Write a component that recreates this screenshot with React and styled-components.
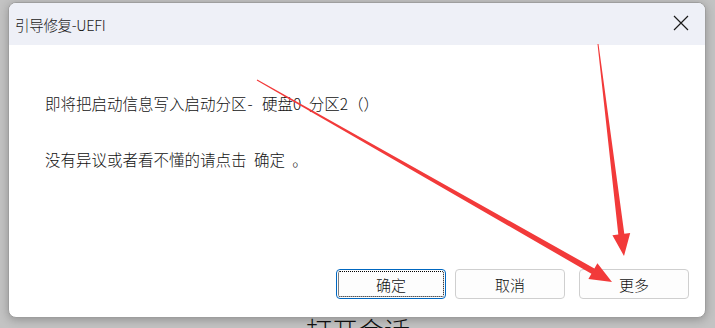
import React from "react";
import styled, { createGlobalStyle } from "styled-components";

const GlobalStyle = createGlobalStyle`
  html, body {
    margin: 0;
    padding: 0;
    background: #c3c3c3;
    overflow: hidden;
  }
  body {
    font-family: "Noto Sans CJK SC", "Noto Sans", sans-serif;
  }
`;

function App() {
  return (
    <Page>
      <GlobalStyle />
      <Window>
        <TitleBar>
          <Title>引导修复-UEFI</Title>
          <CloseButton>
            <svg width="16" height="16" viewBox="0 0 16 16">
              <path d="M1 1 L15 15 M15 1 L1 15" stroke="#1a1a1a" strokeWidth="1.2" fill="none" />
            </svg>
          </CloseButton>
        </TitleBar>
        <Body>
          <Message>即将把启动信息写入启动分区<Dash>-</Dash> 硬盘0 分区2（）</Message>
          <Message>没有异议或者看不懂的请点击 确定 。</Message>
          <ButtonRow>
            <DialogButton $focused>确定</DialogButton>
            <DialogButton>取消</DialogButton>
            <DialogButton $extra>更多</DialogButton>
          </ButtonRow>
        </Body>
      </Window>
      <BehindText>打开会话</BehindText>

      {/* red annotation arrows drawn over the screenshot */}
      <Arrows width="715" height="328" viewBox="0 0 715 328">
        <polygon
          fill="#f23a3a"
          points="256.75,80.44 591.4,273.7 588.4,278.9 612,282 597.4,263.3 594.4,268.5 257.25,79.56"
        />
        <polygon
          fill="#f23a3a"
          points="597.5,44.06 618.3,234.6 612.4,235.3 624,256 630.2,233.1 624.3,233.8 598.5,43.94"
        />
      </Arrows>
    </Page>
  );
}

export default App;

const Page = styled.div`
  position: relative;
  width: 715px;
  height: 328px;
  padding: 2px 0 0 8px;
  box-sizing: border-box;
  display: flex;
  flex-direction: column;
  align-items: flex-start;
  overflow: hidden;
`;

const Window = styled.div`
  width: 698px;
  height: 316px;
  flex-shrink: 0;
  box-sizing: border-box;
  border: 1px solid #9e9e9e;
  border-radius: 8px;
  background: #ffffff;
  overflow: hidden;
  display: flex;
  flex-direction: column;
  box-shadow: 0 2px 10px rgba(0, 0, 0, 0.25);
  position: relative;
  z-index: 1;
`;

const TitleBar = styled.div`
  height: 42px;
  flex-shrink: 0;
  background: #eef0f7;
  display: flex;
  align-items: center;
  justify-content: space-between;
  padding: 0 16px 0 6px;
`;

const Title = styled.div`
  font-size: 14.5px;
  font-weight: 300;
  color: #1a1a1a;
  letter-spacing: -0.3px;
`;

const CloseButton = styled.div`
  width: 16px;
  height: 16px;
  display: flex;
  margin-top: -2px;
`;

const Body = styled.div`
  flex: 1;
  display: flex;
  flex-direction: column;
  padding: 46px 16px 0 36px;
`;

const Message = styled.div`
  font-size: 15.5px;
  font-weight: 300;
  line-height: 24px;
  color: #111;
  margin-bottom: 32px;
  white-space: pre;
  word-spacing: 4px;
`;

const Dash = styled.span`
  margin-left: 1px;
  margin-right: 2px;
`;

const ButtonRow = styled.div`
  margin-top: auto;
  margin-bottom: 18px;
  display: flex;
  justify-content: flex-end;
  gap: 9px;
`;

const DialogButton = styled.div`
  width: 110px;
  height: 30px;
  box-sizing: border-box;
  border: 1px solid ${(p) => (p.$focused ? "#0067c0" : "#cfcfcf")};
  border-radius: 4px;
  background: #fdfdfd;
  display: flex;
  align-items: center;
  justify-content: center;
  font-size: 15px;
  font-weight: 300;
  color: #111;
  margin-left: ${(p) => (p.$extra ? "5px" : "0")};
  outline: ${(p) => (p.$focused ? "1px dotted #000" : "none")};
  outline-offset: -3px;
`;

const BehindText = styled.div`
  margin: -2px 0 0 298px;
  font-size: 26px;
  font-weight: 300;
  line-height: 28px;
  color: #111;
  flex-shrink: 0;
`;

const Arrows = styled.svg`
  position: absolute;
  left: 0;
  top: 0;
  z-index: 2;
  pointer-events: none;
`;
